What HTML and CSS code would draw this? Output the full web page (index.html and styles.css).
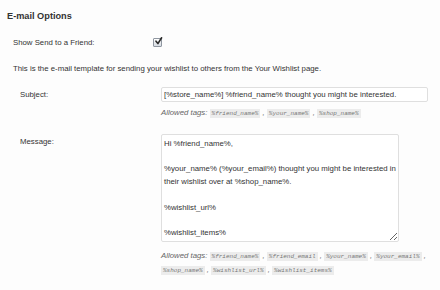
FILE: index.html
```html
<!DOCTYPE html>
<html lang="en">
    <head>
        <meta charset="UTF-8" />
        <meta name="viewport" content="width=device-width, initial-scale=1.0" />
        <title>E-mail Options</title>
        <link rel="stylesheet" href="styles.css">
    </head>
    <body>
        <div class="wrap">
            <h3 class="title">E-mail Options</h3>

            <div class="options">
                <div class="check-row">
                    <label class="check-label" for="showSend">Show Send to a Friend:</label>
                    <span class="checkbox" id="showSend">
                        <svg width="9" height="9" viewBox="0 0 9 9">
                            <path d="M2 4.2 L3.9 6.6 L7.6 0.8" fill="none" stroke="#2b2b2b" stroke-width="1.6" stroke-linecap="round" stroke-linejoin="round" />
                        </svg>
                    </span>
                </div>

                <p class="intro">This is the e-mail template for sending your wishlist to others from the Your Wishlist page.</p>

                <div class="field">
                    <label class="field-label" for="subject">Subject:</label>
                    <div class="field-body">
                        <input type="text" id="subject" class="text-input" value="[%store_name%] %friend_name% thought you might be interested." />
                        <p class="tags">Allowed tags: <code>%friend_name%</code> , <code>%your_name%</code> , <code>%shop_name%</code></p>
                    </div>
                </div>

                <div class="field field-message">
                    <label class="field-label" for="message">Message:</label>
                    <div class="field-body">
                        <textarea id="message" class="text-area">Hi %friend_name%,

%your_name% (%your_email%) thought you might be interested in their wishlist over at %shop_name%.

%wishlist_url%

%wishlist_items%</textarea>
                        <p class="tags">Allowed tags: <code>%friend_name%</code> , <code>%friend_email</code> , <code>%your_name%</code> , <code>%your_email%</code> , <code>%shop_name%</code> , <code>%wishlist_url%</code> , <code>%wishlist_items%</code></p>
                    </div>
                </div>
            </div>
        </div>
    </body>
</html>
```

FILE: styles.css
```css
body {
    margin: 0;
    background-color: #fdfdfd;
    color: #333;
    font-family: "Liberation Sans", Arial, sans-serif;
    font-size: 7.8px;
    line-height: 13px;
}
.wrap {
    padding: 10px 0 0 7px;
}
.title {
    margin: 0;
    font-size: 9.2px;
    line-height: 12px;
    font-weight: bold;
    color: #333;
}
.options {
    padding-left: 6px;
}
.check-row {
    display: flex;
    align-items: center;
    height: 13px;
    margin-top: 14px;
}
.check-label {
    width: 140px;
}
.checkbox {
    display: flex;
    align-items: center;
    justify-content: center;
    width: 7px;
    height: 7px;
    border: 1px solid #8f96a0;
    border-radius: 1px;
    background: linear-gradient(#ffffff, #d6dbe2);
    overflow: visible;
}
.checkbox svg {
    flex: none;
    margin: -2px 0 0 1px;
}
.intro {
    margin: 13px 0 0;
}
.field {
    display: flex;
    margin-top: 12px;
}
.field-label {
    flex: none;
    width: 141px;
    padding-left: 7px;
    line-height: 15px;
}
.field-body {
    width: 278px;
}
.text-input {
    display: block;
    box-sizing: border-box;
    width: 267px;
    height: 15px;
    margin: 0;
    padding: 0 2px;
    border: 1px solid #dfdfdf;
    border-radius: 2px;
    background-color: #fff;
    color: #333;
    font-family: inherit;
    font-size: 7.8px;
}
.tags {
    margin: 4px 0 0;
    color: #666;
    font-style: italic;
}
code {
    padding: 1px 2px;
    background-color: #ececec;
    color: #777;
    font-family: "Liberation Mono", monospace;
    font-size: 6px;
    font-style: italic;
}
.field-message {
    margin-top: 14px;
}
.field-message .field-label {
    padding-top: 1px;
    line-height: 13px;
}
.text-area {
    display: block;
    box-sizing: border-box;
    width: 238px;
    height: 108px;
    margin: 0;
    padding: 3px 0 3px 2px;
    border: 1px solid #dfdfdf;
    border-radius: 2px;
    background-color: #fff;
    color: #333;
    font-family: inherit;
    font-size: 7.8px;
    line-height: 12.7px;
    overflow: hidden;
}
.field-message .tags {
    margin-top: 7px;
}
```
